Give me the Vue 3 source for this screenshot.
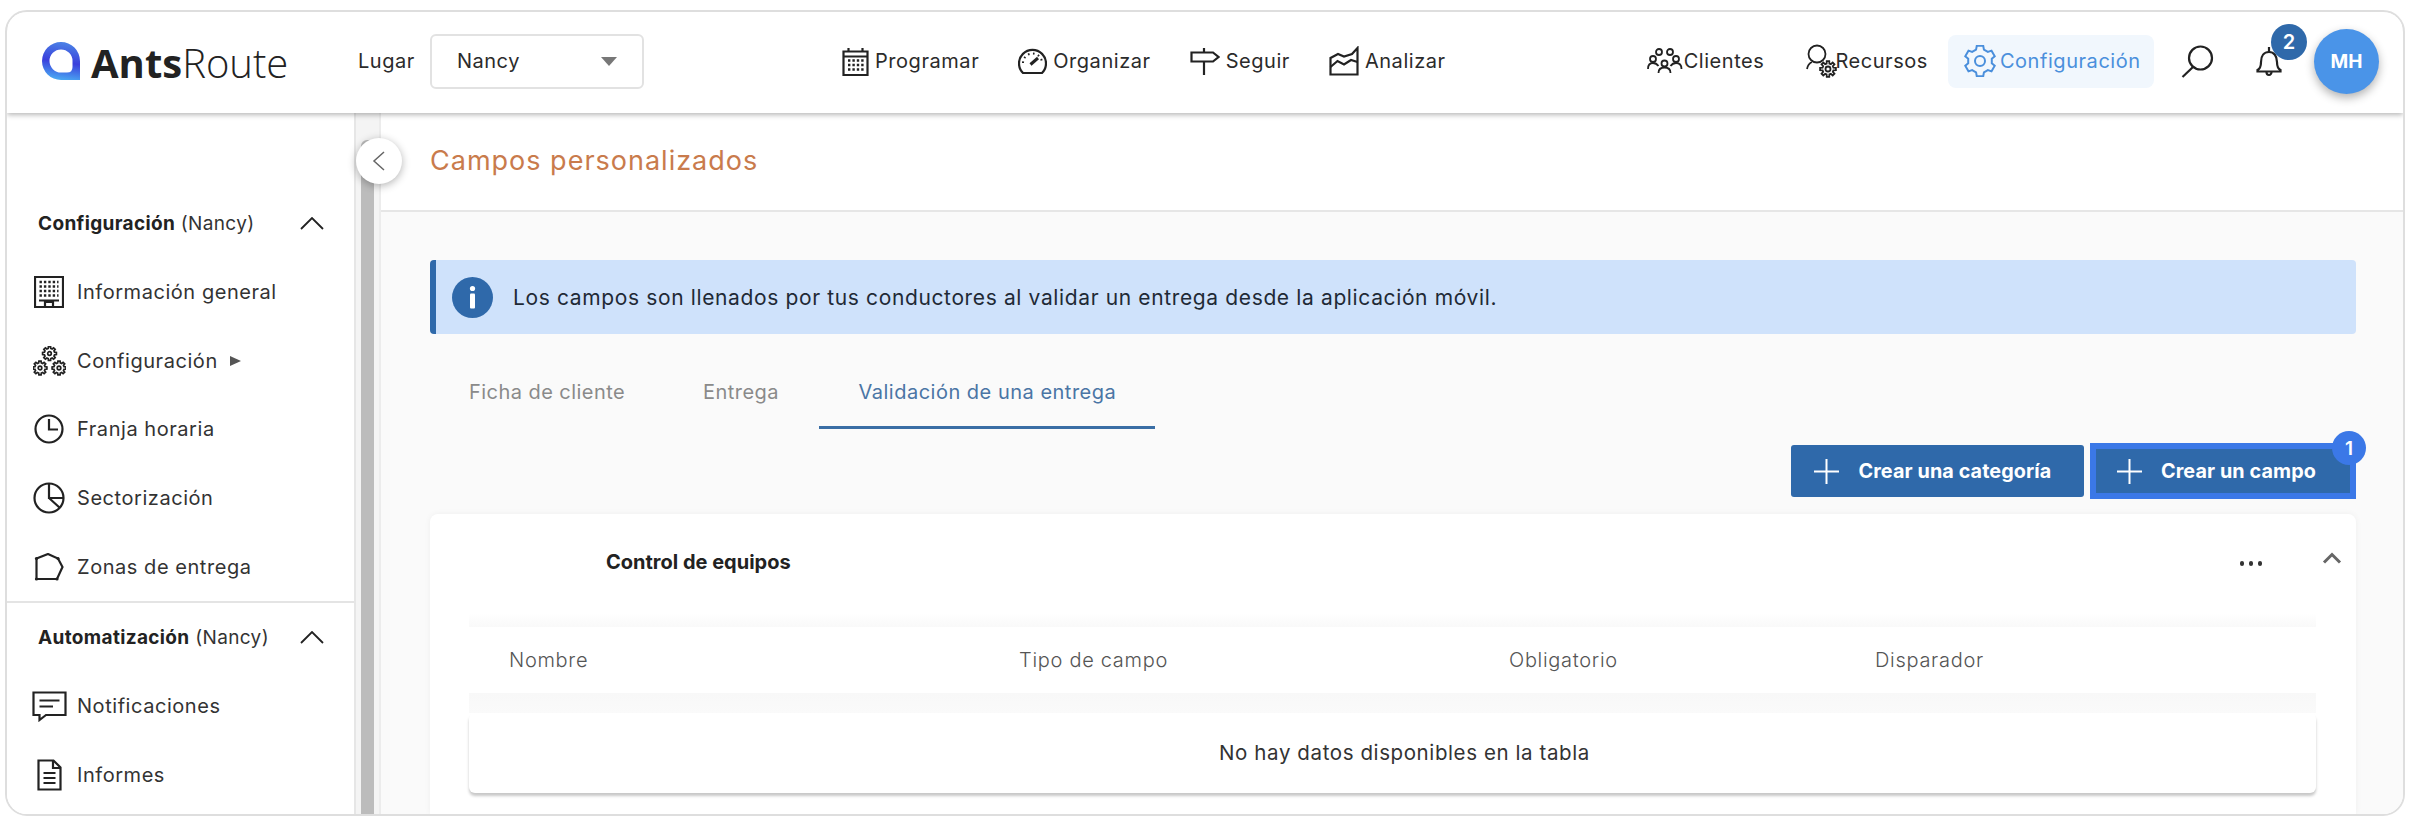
<script setup>
function gear(cx, cy, ro, ri, n) {
  const pts = []
  const step = (Math.PI * 2) / n
  for (let i = 0; i < n; i++) {
    const a = i * step - Math.PI / 2
    const w = step * 0.2
    const p = [
      [ri, a - step / 2 + w * 0.9],
      [ro, a - w],
      [ro, a + w],
      [ri, a + step / 2 - w * 0.9],
    ]
    p.forEach(([r, t]) => pts.push(`${(cx + r * Math.cos(t)).toFixed(2)} ${(cy + r * Math.sin(t)).toFixed(2)}`))
  }
  return 'M' + pts.join('L') + 'Z'
}
const navGear = gear(16, 16, 15.5, 12, 6)
const resGear = gear(8, 8, 8, 5.6, 8)
const g1 = gear(16.5, 7.5, 7, 5.2, 8)
const g2 = gear(7, 22, 7, 5.2, 8)
const g3 = gear(26, 22, 7, 5.2, 8)
const columns = ['Nombre', 'Tipo de campo', 'Obligatorio', 'Disparador']
</script>

<template>
  <div class="frame">
    <header class="topbar">
      <svg class="logo-mark" width="38" height="38" viewBox="0 0 38 38">
        <defs>
          <linearGradient id="lg" x1="0.75" y1="0" x2="0.6" y2="1">
            <stop offset="0" stop-color="#4c86e6" />
            <stop offset="0.55" stop-color="#3a3fdc" />
            <stop offset="1" stop-color="#4aa6f2" />
          </linearGradient>
        </defs>
        <path fill="url(#lg)" fill-rule="evenodd" d="M19 0A19 19 0 0 1 38 19V38H19A19 19 0 0 1 19 0ZM19 7.5A11.5 11.5 0 0 0 19 30.5H25Q30.5 30.5 30.5 25V19A11.5 11.5 0 0 0 19 7.5Z" />
      </svg>
      <div class="logo-text"><b>Ants</b><span>Route</span></div>
      <span class="lugar">Lugar</span>
      <div class="select"><span>Nancy</span><i class="caret"></i></div>

      <nav class="nav main-nav">
        <a class="nav-item">
          <svg width="27" height="29" viewBox="0 0 27 29" class="ic">
            <path d="M1.5 4.5H25.5V28H1.5ZM1.5 9.5H25.5" />
            <path d="M6.5 1V5M20.5 1V5" />
            <path class="dots" d="M6 13.5H22M6 18H22M6 22.5H22" />
          </svg>
          <span>Programar</span>
        </a>
        <a class="nav-item">
          <svg width="29" height="26" viewBox="0 0 29 26" class="ic">
            <path d="M5 25A13.5 13.5 0 1 1 24 25Z" />
            <path class="dots2" d="M5 15A9.5 9.5 0 0 1 24 15" />
            <path class="thick" d="M12.5 16.5L20 10" />
          </svg>
          <span>Organizar</span>
        </a>
        <a class="nav-item">
          <svg width="30" height="28" viewBox="0 0 30 28" class="ic">
            <path d="M1.5 5.5H23L28.5 10L23 14.5H1.5Z" />
            <path d="M14 1V5.5M14 14.5V28" />
          </svg>
          <span>Seguir</span>
        </a>
        <a class="nav-item">
          <svg width="30" height="30" viewBox="0 0 30 30" class="ic">
            <path d="M1.5 12L9 8L15 10.5L23 8L28.5 2V28.5H1.5Z" />
            <path d="M1.5 21L8.5 15L15 18.5L22 14L28.5 16" />
          </svg>
          <span>Analizar</span>
        </a>
      </nav>

      <nav class="nav right-nav">
        <a class="nav-item tight">
          <svg width="36" height="26" viewBox="0 0 36 26" class="ic thin">
            <circle cx="12" cy="4" r="3" /><circle cx="23" cy="4" r="3" />
            <circle cx="6" cy="11" r="3" /><circle cx="29" cy="11" r="3" /><circle cx="17.5" cy="15.5" r="3" />
            <path d="M1 21C1 16.5 3 15 6 15S10 16 11.5 18M34.5 21C34.5 16.5 32 15 29 15S25 16 23.5 18M11.5 25C11.5 21 14 19.5 17.5 19.5S23.5 21 23.5 25" />
          </svg>
          <span>Clientes</span>
        </a>
        <a class="nav-item tight rec">
          <svg width="32" height="34" viewBox="0 0 32 34" class="ic thin">
            <circle cx="11" cy="10" r="8.5" />
            <path d="M1 25C1.5 22 4 19 6 18" />
            <g transform="translate(14 17)"><path :d="resGear" /><circle cx="8" cy="8" r="2.5" /></g>
          </svg>
          <span>Recursos</span>
        </a>
        <a class="nav-item tight active">
          <svg width="32" height="32" viewBox="0 0 32 32" class="ic">
            <path :d="navGear" /><circle cx="16" cy="16" r="5" />
          </svg>
          <span>Configuración</span>
        </a>
      </nav>

      <svg class="search ic" width="33" height="33" viewBox="0 0 33 33">
        <circle cx="19.5" cy="13" r="11.5" /><path d="M12 22L1.5 32" />
      </svg>
      <div class="bell-wrap">
        <svg width="26" height="33" viewBox="0 0 26 33" class="ic">
          <path d="M1.5 26.5H24.5V25C21.5 23.5 21 21 21 17C21 11 18 7 13 7S5 11 5 17C5 21 4.5 23.5 1.5 25Z" />
          <path d="M13 2V7" />
          <path d="M10.5 27A2.5 3 0 0 0 15.5 27" />
        </svg>
        <span class="badge-2">2</span>
      </div>
      <div class="avatar">MH</div>
    </header>

    <div class="body">
      <aside class="sidebar">
        <div class="side-head first">
          <div><b>Configuración</b> (Nancy)</div>
          <svg width="24" height="13" viewBox="0 0 24 13" class="ic thin"><path d="M1 12L12 1L23 12" /></svg>
        </div>
        <div class="side-item">
          <span class="side-ic"><svg width="30" height="32" viewBox="0 0 30 32" class="ic">
            <path d="M1 1H29V31H1Z" />
            <path class="dots" d="M5.5 6H24.5M5.5 10.5H24.5M5.5 15H24.5M5.5 19.5H24.5" />
            <path d="M5 24.5H25M11 31V26H19V31" />
          </svg></span>
          <span>Información general</span>
        </div>
        <div class="side-item">
          <span class="side-ic"><svg width="33" height="30" viewBox="0 0 33 30" class="ic gears">
            <path :d="g1" /><circle cx="16.5" cy="7.5" r="1.8" />
            <path :d="g2" /><circle cx="7" cy="22" r="1.8" />
            <path :d="g3" /><circle cx="26" cy="22" r="1.8" />
          </svg></span>
          <span>Configuración</span><i class="tri"></i>
        </div>
        <div class="side-item">
          <span class="side-ic"><svg width="30" height="30" viewBox="0 0 30 30" class="ic">
            <circle cx="15" cy="15" r="13.5" /><path d="M15 5V15.5H24" />
          </svg></span>
          <span>Franja horaria</span>
        </div>
        <div class="side-item">
          <span class="side-ic"><svg width="32" height="32" viewBox="0 0 32 32" class="ic">
            <circle cx="16" cy="16" r="14.5" /><path d="M16 2V16H30.5M16 16L27 26" />
          </svg></span>
          <span>Sectorización</span>
        </div>
        <div class="side-item">
          <span class="side-ic"><svg width="30" height="28" viewBox="0 0 30 28" class="ic">
            <path d="M2.5 5.5L14 1L24 5.5L28.5 14L23 26H2.5Z" />
            <circle class="fill" cx="2.5" cy="26" r="1.6" /><circle class="fill" cx="23" cy="26" r="1.6" />
            <circle class="fill" cx="24" cy="5.5" r="1.6" /><circle class="fill" cx="2.5" cy="5.5" r="1.6" />
          </svg></span>
          <span>Zonas de entrega</span>
        </div>
        <div class="side-sep"></div>
        <div class="side-head">
          <div><b>Automatización</b> (Nancy)</div>
          <svg width="24" height="13" viewBox="0 0 24 13" class="ic thin"><path d="M1 12L12 1L23 12" /></svg>
        </div>
        <div class="side-item">
          <span class="side-ic"><svg width="35" height="31" viewBox="0 0 35 31" class="ic">
            <path d="M1.5 1.5H33.5V24H14L7.5 29V24H1.5Z" />
            <path d="M7.5 9.5H27.5M7.5 15.5H21" />
          </svg></span>
          <span>Notificaciones</span>
        </div>
        <div class="side-item">
          <span class="side-ic"><svg width="25" height="32" viewBox="0 0 25 32" class="ic">
            <path d="M1.5 1.5H16.5L23.5 8.5V30.5H1.5Z" />
            <path d="M16 1.5V9H23.5M6.5 14H18.5M6.5 19H18.5M6.5 24H18.5" />
          </svg></span>
          <span>Informes</span>
        </div>
      </aside>

      <div class="gutter"><div class="thumb"></div></div>

      <button class="collapse">
        <svg width="14" height="20" viewBox="0 0 14 20" class="ic thin gray"><path d="M12 1L2 10L12 19" /></svg>
      </button>

      <section class="content">
        <div class="title-bar"><h1>Campos personalizados</h1></div>
        <main class="main">
          <div class="banner">
            <svg width="41" height="41" viewBox="0 0 41 41">
              <circle cx="20.5" cy="20.5" r="20.5" fill="#2f69aa" />
              <circle cx="20.5" cy="11.5" r="2.6" fill="#fff" />
              <rect x="18" y="16.5" width="5" height="15" rx="1" fill="#fff" />
            </svg>
            <span>Los campos son llenados por tus conductores al validar un entrega desde la aplicación móvil.</span>
          </div>

          <div class="tabs">
            <a class="tab">Ficha de cliente</a>
            <a class="tab">Entrega</a>
            <a class="tab on">Validación de una entrega</a>
          </div>

          <div class="actions">
            <button class="btn">
              <svg width="25" height="25" viewBox="0 0 25 25"><path d="M12.5 0V25M0 12.5H25" stroke="#fff" stroke-width="2" /></svg>
              Crear una categoría
            </button>
            <button class="btn focus">
              <svg width="25" height="25" viewBox="0 0 25 25"><path d="M12.5 0V25M0 12.5H25" stroke="#fff" stroke-width="2" /></svg>
              Crear un campo
              <span class="badge-1">1</span>
            </button>
          </div>

          <div class="card">
            <div class="card-head">
              <b>Control de equipos</b>
              <span class="more"><i></i><i></i><i></i></span>
              <svg width="20" height="12" viewBox="0 0 20 12" class="chev"><path d="M2 10.5L10 2.5L18 10.5" /></svg>
            </div>
            <div class="band"></div>
            <div class="thead">
              <span v-for="c in columns" :key="c">{{ c }}</span>
            </div>
            <div class="band two"></div>
            <div class="empty">No hay datos disponibles en la tabla</div>
          </div>
        </main>
      </section>
    </div>
  </div>
</template>

<style>
html, body { margin: 0; background: #fff; overflow: hidden; }
</style>

<style scoped>
* { box-sizing: border-box; }
.frame {
  margin: 10px 5px;
  width: 2400px;
  height: 806px;
  border: 2px solid #dedede;
  border-radius: 22px;
  overflow: hidden;
  display: flex;
  flex-direction: column;
  font-family: Inter, "Noto Sans", sans-serif;
  color: #2b2b2b;
  background: #fff;
}
.ic { fill: none; stroke: #222; stroke-width: 2.2; flex: none; display: block; }
.ic.thin { stroke-width: 1.8; }
.ic.gears { stroke-width: 1.7; }
.ic.gray { stroke: #666; stroke-width: 1.5; }
.ic .dots { stroke-width: 2.4; stroke-dasharray: 2.4 2; }
.ic .dots2 { stroke-width: 2; stroke-dasharray: 1.6 3.5; }
.ic .thick { stroke-width: 3; }
.ic .fill { fill: #222; stroke: none; }

.topbar {
  height: 101px;
  flex: none;
  display: flex;
  align-items: center;
  padding: 0 0 3px 35px;
  position: relative;
  z-index: 3;
  background: #fff;
  box-shadow: 0 2px 5px rgba(0, 0, 0, 0.28);
}
.logo-text {
  margin-left: 11px;
  font-family: "Open Sans", sans-serif;
  font-size: 40px;
  line-height: 1;
  width: 197px;
  white-space: nowrap;
  color: #222;
  position: relative;
  top: 2px;
}
.logo-text b { font-weight: 700; }
.logo-text span { font-weight: 300; }
.lugar { margin-left: 70px; width: 72px; font-size: 20px; letter-spacing: 0.5px; }
.select {
  width: 214px;
  height: 55px;
  border: 2px solid #e2e2e2;
  border-radius: 6px;
  display: flex;
  align-items: center;
  justify-content: space-between;
  padding: 0 25px 0 25px;
  font-size: 20px;
  letter-spacing: 0.5px;
}
.caret {
  width: 0;
  height: 0;
  border-left: 8px solid transparent;
  border-right: 8px solid transparent;
  border-top: 9px solid #777;
}
.nav { display: flex; align-items: center; }
.nav-item {
  display: flex;
  align-items: center;
  gap: 6px;
  font-size: 20px;
  letter-spacing: 0.55px;
  white-space: nowrap;
  color: #2b2b2b;
}
.main-nav { margin-left: 198px; gap: 39px; }
.right-nav { margin-left: 201px; gap: 42px; }
.nav-item.tight { gap: 1px; }
.nav-item.rec { gap: 0; margin-left: 0; margin-right: -22px; }
.nav-item.rec span { margin-left: -3px; }
.nav-item.active {
  background: #f1f7fd;
  border-radius: 8px;
  height: 53px;
  width: 206px;
  padding-left: 16px;
  gap: 4px;
  color: #4a8fdc;
}
.nav-item.active .ic { stroke: #4a8fdc; stroke-width: 2; }
.search { margin-left: 27px; }
.bell-wrap { margin-left: 42px; position: relative; }
.badge-2 {
  position: absolute;
  left: 15px;
  top: -21px;
  width: 36px;
  height: 36px;
  border-radius: 50%;
  background: #2f69aa;
  color: #fff;
  font-size: 20px;
  font-weight: 600;
  display: flex;
  align-items: center;
  justify-content: center;
}
.avatar {
  margin-left: 32px;
  width: 65px;
  height: 65px;
  border-radius: 50%;
  background: #4a94e8;
  color: #fff;
  font-size: 19px;
  font-weight: 700;
  display: flex;
  align-items: center;
  justify-content: center;
  box-shadow: 0 4px 10px rgba(0, 0, 0, 0.3);
}

.body { flex: 1; min-height: 0; display: flex; position: relative; }
.sidebar {
  width: 349px;
  flex: none;
  border-right: 2px solid #e6e6e6;
  background: #fff;
  font-size: 20px;
  letter-spacing: 0.55px;
  color: #333;
}
.side-head {
  display: flex;
  align-items: center;
  justify-content: space-between;
  height: 40px;
  padding: 0 30px 0 31px;
  margin-top: 15px;
  margin-bottom: 14px;
  font-size: 19px;
  letter-spacing: 0.35px;
  white-space: nowrap;
}
.side-head.first { margin-top: 90px; margin-bottom: 15px; }
.side-head b { font-weight: 700; color: #222; }
.side-item {
  height: 68.6px;
  display: flex;
  align-items: center;
  padding-left: 23px;
}
.side-ic { width: 38px; margin-right: 9px; display: flex; justify-content: center; }
.tri {
  margin-left: 12px;
  width: 0;
  height: 0;
  border-top: 5.5px solid transparent;
  border-bottom: 5.5px solid transparent;
  border-left: 11px solid #555;
}
.side-sep { height: 2px; background: #e4e4e4; }

.gutter {
  width: 25px;
  flex: none;
  padding: 27px 5px 0;
  display: flex;
  background: #f4f4f4;
  border-right: 2px solid #ececec;
}
.thumb { flex: 1; background: #bcbcbc; width: 13px; border-radius: 6px 6px 0 0; }
.collapse {
  position: absolute;
  left: 349px;
  top: 25px;
  width: 46px;
  height: 46px;
  border-radius: 50%;
  border: 0;
  padding: 0;
  background: #fff;
  box-shadow: 0 2px 8px rgba(0, 0, 0, 0.3);
  display: flex;
  align-items: center;
  justify-content: center;
}

.content { flex: 1; min-width: 0; display: flex; flex-direction: column; background: #fafafa; }
.title-bar {
  height: 99px;
  flex: none;
  background: #fff;
  border-bottom: 2px solid #e6e6e6;
  padding-left: 49px;
  display: flex;
  align-items: center;
}
.title-bar h1 {
  margin: 0 0 2px;
  font-size: 27px;
  font-weight: 400;
  letter-spacing: 1px;
  color: #c97b4c;
}
.main {
  flex: 1;
  min-height: 0;
  padding: 48px 47px 0 49px;
  display: flex;
  flex-direction: column;
}
.banner {
  height: 74px;
  flex: none;
  display: flex;
  align-items: center;
  gap: 20px;
  padding-left: 16px;
  background: #cfe2fb;
  border-left: 6px solid #2f69aa;
  border-radius: 4px;
  font-size: 21px;
  letter-spacing: 0.63px;
  color: #1f2a36;
}
.tabs { display: flex; margin-top: 23px; height: 72px; flex: none; }
.tab {
  padding: 1px 39px 0;
  display: flex;
  align-items: center;
  font-size: 20px;
  letter-spacing: 0.45px;
  color: #8a8a8a;
  border-bottom: 3px solid transparent;
}
.tab.on { margin-left: 1.5px; color: #4a75a5; border-bottom-color: #3a6ea5; letter-spacing: 0.5px; }
.actions {
  display: flex;
  justify-content: flex-end;
  align-items: center;
  gap: 6px;
  margin-top: 14px;
  height: 56px;
  flex: none;
}
.btn {
  position: relative;
  height: 52px;
  border: 0;
  border-radius: 3px;
  background: #2f69aa;
  color: #fff;
  font-family: inherit;
  font-size: 19.8px;
  font-weight: 700;
  letter-spacing: 0.1px;
  display: flex;
  align-items: center;
  gap: 19px;
  padding: 0 32.5px 0 23px;
}
.btn.focus {
  height: 56px;
  border: 6px solid #3b78e7;
  border-radius: 0;
  padding: 0 34px 0 21px;
}
.badge-1 {
  position: absolute;
  right: -16px;
  top: -18px;
  width: 34px;
  height: 34px;
  border-radius: 50%;
  background: #3b78e7;
  font-size: 19px;
  font-weight: 600;
  display: flex;
  align-items: center;
  justify-content: center;
}
.card {
  flex: 1;
  margin-top: 15px;
  background: #fff;
  border-radius: 8px 8px 0 0;
  box-shadow: 0 0 6px rgba(0, 0, 0, 0.05);
  padding: 0 40px 0 39px;
}
.card-head {
  height: 99px;
  display: flex;
  align-items: flex-start;
  padding: 38px 0 0 137px;
  position: relative;
  font-size: 20px;
  color: #222;
}
.card-head b { font-weight: 700; line-height: 20px; }
.more { margin-left: auto; margin-right: 60px; display: flex; gap: 4.5px; padding-top: 9px; }
.more i { width: 4.5px; height: 4.5px; background: #333; border-radius: 50%; }
.chev {
  margin-right: -26px;
  margin-top: 0;
  fill: none;
  stroke: #666;
  stroke-width: 3;
}
.band { height: 14px; background: linear-gradient(#fff, #f9f9f9); }
.band.two { height: 20px; background: linear-gradient(#f8f8f8, #fafafa); }
.thead {
  height: 66px;
  display: grid;
  grid-template-columns: 510px 490px 366px 1fr;
  align-items: center;
  padding-left: 40px;
  font-size: 20px;
  letter-spacing: 0.7px;
  font-weight: 300;
  color: #555;
}
.empty {
  height: 80px;
  background: #fff;
  border-radius: 6px;
  box-shadow: 0 3px 3px rgba(0, 0, 0, 0.22);
  display: flex;
  align-items: center;
  justify-content: center;
  padding: 0 0 2px 24px;
  font-size: 20.5px;
  letter-spacing: 0.6px;
  color: #333;
}
</style>
